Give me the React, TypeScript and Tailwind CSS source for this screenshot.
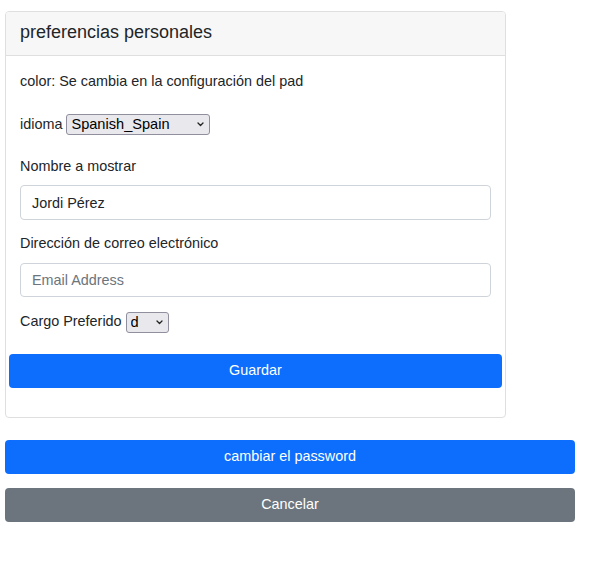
import React, { useState } from 'react';

type Opt = { value: string; label: string };

// native-looking select with the small chevron
const SmallSelect: React.FC<{
  value: string;
  onChange: (v: string) => void;
  options: Opt[];
  width: string;
}> = ({ value, onChange, options, width }) => (
  <div className={`relative ml-[4px] h-[21px] ${width}`}>
    <select
      value={value}
      onChange={(e) => onChange(e.target.value)}
      className="appearance-none w-full h-full bg-[#e9e9ed] border border-[#8f8f9d] rounded-[3px] text-[14.6px] leading-none pl-[4px] pr-[18px] text-black"
    >
      {options.map((o) => (
        <option key={o.value} value={o.value}>
          {o.label}
        </option>
      ))}
    </select>
    <svg
      className="pointer-events-none absolute right-[6px] top-[8px]"
      width="7"
      height="5"
      viewBox="0 0 7 5"
      fill="none"
    >
      <path d="M1 1 L3.5 3.5 L6 1" stroke="#222" strokeWidth="1.3" strokeLinecap="round" strokeLinejoin="round" />
    </svg>
  </div>
);

const App: React.FC = () => {
  const [idioma, setIdioma] = useState('Spanish_Spain');
  const [nombre, setNombre] = useState('Jordi Pérez');
  const [email, setEmail] = useState('');
  const [cargo, setCargo] = useState('d');

  return (
    <div className="min-h-screen bg-white text-[#212529] font-['Liberation_Sans',Arial,sans-serif] text-[14.4px] px-[5px] pt-[11px]">
      {/* Preferences card */}
      <div className="w-[501px] border border-[#dfdfdf] rounded-[4px] overflow-hidden">
        <div className="h-[44px] bg-[#f7f7f7] border-b border-[#dfdfdf] px-[14px] pb-[4px] flex items-center">
          <h2 className="text-[18px] leading-none">preferencias personales</h2>
        </div>

        <div className="pt-[16px] pb-[29px] px-[3px]">
          <div className="px-[11px]">
            <p className="leading-[18px]">color: Se cambia en la configuración del pad</p>

            <div className="mt-[24px] h-[21px] flex items-center">
              <span>idioma</span>
              <SmallSelect
                value={idioma}
                onChange={setIdioma}
                width="w-[144px]"
                options={[
                  { value: 'Spanish_Spain', label: 'Spanish_Spain' },
                  { value: 'English_US', label: 'English_US' },
                  { value: 'Catalan_Spain', label: 'Catalan_Spain' },
                ]}
              />
            </div>

            <label className="block mt-[22px] leading-[18px]">Nombre a mostrar</label>
            <input
              value={nombre}
              onChange={(e) => setNombre(e.target.value)}
              className="block mt-[10px] w-[471px] h-[35px] border border-[#ced4da] rounded-[4px] px-[11px] text-[14.4px] outline-none"
            />

            <label className="block mt-[14px] leading-[18px]">Dirección de correo electrónico</label>
            <input
              value={email}
              onChange={(e) => setEmail(e.target.value)}
              placeholder="Email Address"
              className="block mt-[11px] w-[471px] h-[34px] border border-[#ced4da] rounded-[4px] px-[11px] text-[14.4px] outline-none placeholder:text-[#6c757d]"
            />

            <div className="mt-[15px] h-[20px] flex items-center">
              <span>Cargo Preferido</span>
              <SmallSelect
                value={cargo}
                onChange={setCargo}
                width="w-[43px]"
                options={[
                  { value: 'd', label: 'd' },
                  { value: 'a', label: 'a' },
                ]}
              />
            </div>
          </div>

          <button className="mt-[22px] w-[493px] h-[34px] bg-[#0d6efd] text-white rounded-[4px] text-[14.4px]">
            Guardar
          </button>
        </div>
      </div>

      <div className="w-[570px] mt-[22px] flex flex-col gap-[14px]">
        <button className="h-[34px] bg-[#0d6efd] text-white rounded-[4px] text-[14.4px]">
          cambiar el password
        </button>
        <button className="h-[34px] bg-[#6c757d] text-white rounded-[4px] text-[14.4px]">
          Cancelar
        </button>
      </div>
    </div>
  );
};

export default App;
